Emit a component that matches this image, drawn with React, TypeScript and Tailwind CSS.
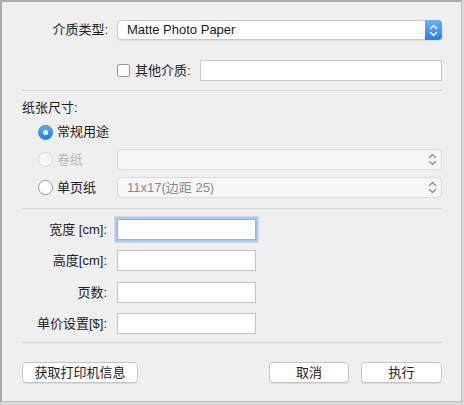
import type { ReactNode } from 'react'

const font = { fontFamily: '"Liberation Sans", "Noto Sans CJK SC", sans-serif' }

function Chevrons({ color }: { color: string }) {
  return (
    <svg width="9" height="13" viewBox="0 0 9 13" fill="none" stroke={color} strokeWidth="1.4" strokeLinecap="round" strokeLinejoin="round">
      <path d="M1.5 4.5 L4.5 1.5 L7.5 4.5" />
      <path d="M1.5 8.5 L4.5 11.5 L7.5 8.5" />
    </svg>
  )
}

function Radio({ checked, disabled }: { checked?: boolean; disabled?: boolean }) {
  if (checked) {
    return (
      <span className="flex h-[15px] w-[15px] items-center justify-center rounded-full bg-gradient-to-b from-[#5fa9f8] to-[#1b7cf4] border border-[#2f7fe0]">
        <span className="h-[5px] w-[5px] rounded-full bg-white" />
      </span>
    )
  }
  return (
    <span
      className={
        disabled
          ? 'h-[15px] w-[15px] rounded-full border border-[#dadada] bg-[#f6f6f6]'
          : 'h-[15px] w-[15px] rounded-full border border-[#9a9a9a] bg-white shadow-[0_1px_0_rgba(0,0,0,0.05)]'
      }
    />
  )
}

function TextInput({ focused }: { focused?: boolean }) {
  return (
    <div
      className={
        focused
          ? 'h-[21px] w-[139px] border border-[#8fb4e6] bg-white shadow-[0_0_0_2.5px_#a9c9f1]'
          : 'h-[21px] w-[139px] border border-[#c4c4c4] bg-white'
      }
    />
  )
}

function FieldRow({ label, children, className }: { label: string; children: ReactNode; className?: string }) {
  return (
    <div className={`flex items-center ${className ?? ''}`}>
      <div className="w-[86px] pr-[1px] text-right text-[13px] text-[#222]">{label}</div>
      <div className="ml-[9px]">{children}</div>
    </div>
  )
}

function Button({ children, className }: { children: ReactNode; className?: string }) {
  return (
    <button
      type="button"
      className={`flex h-[21px] items-center justify-center rounded-[4px] border border-[#c6c6c6] bg-white text-[13px] text-[#222] shadow-[0_1px_0_rgba(0,0,0,0.08)] ${className ?? ''}`}
    >
      {children}
    </button>
  )
}

export default function App() {
  return (
    <div style={font} className="h-[405px] w-[464px] bg-[#d8d8d8]">
      <div className="h-[402px] w-[462px] border-t-2 border-l-2 border-[#a9a9a9] border-r border-b border-r-[#bdbdbd] border-b-[#bdbdbd] bg-[#efefef]">
        <div className="pl-[20px] pr-[19px] pt-[18px]">
          {/* media type */}
          <div className="flex items-center">
            <div className="w-[86px] text-right text-[13px] text-[#222]">介质类型:</div>
            <div className="ml-[9px] flex h-[20px] flex-1 items-stretch rounded-[4px] border border-[#c9c9c9] bg-white shadow-[0_1px_0_rgba(0,0,0,0.06)]">
              <div className="flex flex-1 items-center pl-[9px] text-[13px] text-[#1a1a1a]">Matte Photo Paper</div>
              <div className="-my-px -mr-px flex w-[17px] items-center justify-center rounded-r-[4px] bg-gradient-to-b from-[#68b0fb] to-[#1a80fa]">
                <Chevrons color="#ffffff" />
              </div>
            </div>
          </div>

          {/* other media */}
          <div className="mt-[20px] flex items-center">
            <div className="ml-[95px] h-[13px] w-[13px] rounded-[2px] border border-[#9a9a9a] bg-white" />
            <div className="ml-[5px] text-[13px] text-[#222]">其他介质:</div>
            <div className="ml-[9px] h-[21px] flex-1 border border-[#c9c9c9] bg-white" />
          </div>

          <div className="mt-[9px] h-px bg-[#d6d6d6]" />

          {/* paper size */}
          <div className="mt-[9px] text-[13px] leading-[16px] text-[#222]">纸张尺寸:</div>

          <div className="mt-[8px] flex h-[16px] items-center pl-[16px]">
            <Radio checked />
            <span className="ml-[4px] text-[13px] text-[#222]">常规用途</span>
          </div>

          <div className="mt-[9px] flex h-[21px] items-center">
            <div className="flex w-[95px] items-center pl-[16px]">
              <Radio disabled />
              <span className="ml-[4px] text-[13px] text-[#b8b8b8]">卷纸</span>
            </div>
            <div className="flex h-[21px] flex-1 items-center justify-end rounded-[4px] border border-[#dcdcdc] bg-[#f6f6f6] pr-[4px]">
              <Chevrons color="#8e8e8e" />
            </div>
          </div>

          <div className="mt-[7px] flex h-[21px] items-center">
            <div className="flex w-[95px] items-center pl-[16px]">
              <Radio />
              <span className="ml-[4px] text-[13px] text-[#222]">单页纸</span>
            </div>
            <div className="flex h-[21px] flex-1 items-center rounded-[4px] border border-[#dcdcdc] bg-[#f6f6f6] pl-[9px] pr-[4px]">
              <span className="flex-1 text-[13px] text-[#8a8a8a]">11x17(边距 25)</span>
              <Chevrons color="#8e8e8e" />
            </div>
          </div>

          <div className="mt-[10px] h-px bg-[#d6d6d6]" />

          {/* dimensions */}
          <FieldRow label="宽度 [cm]:" className="mt-[10px]">
            <TextInput focused />
          </FieldRow>
          <FieldRow label="高度[cm]:" className="mt-[10px]">
            <TextInput />
          </FieldRow>
          <FieldRow label="页数:" className="mt-[11px]">
            <TextInput />
          </FieldRow>
          <FieldRow label="单价设置[$]:" className="mt-[10px]">
            <TextInput />
          </FieldRow>

          <div className="mt-[8px] h-px bg-[#d6d6d6]" />

          <div className="mt-[19px] flex items-center">
            <Button className="w-[116px]">获取打印机信息</Button>
            <div className="flex-1" />
            <Button className="w-[80px]">取消</Button>
            <Button className="ml-[12px] w-[81px]">执行</Button>
          </div>
        </div>
      </div>
    </div>
  )
}
